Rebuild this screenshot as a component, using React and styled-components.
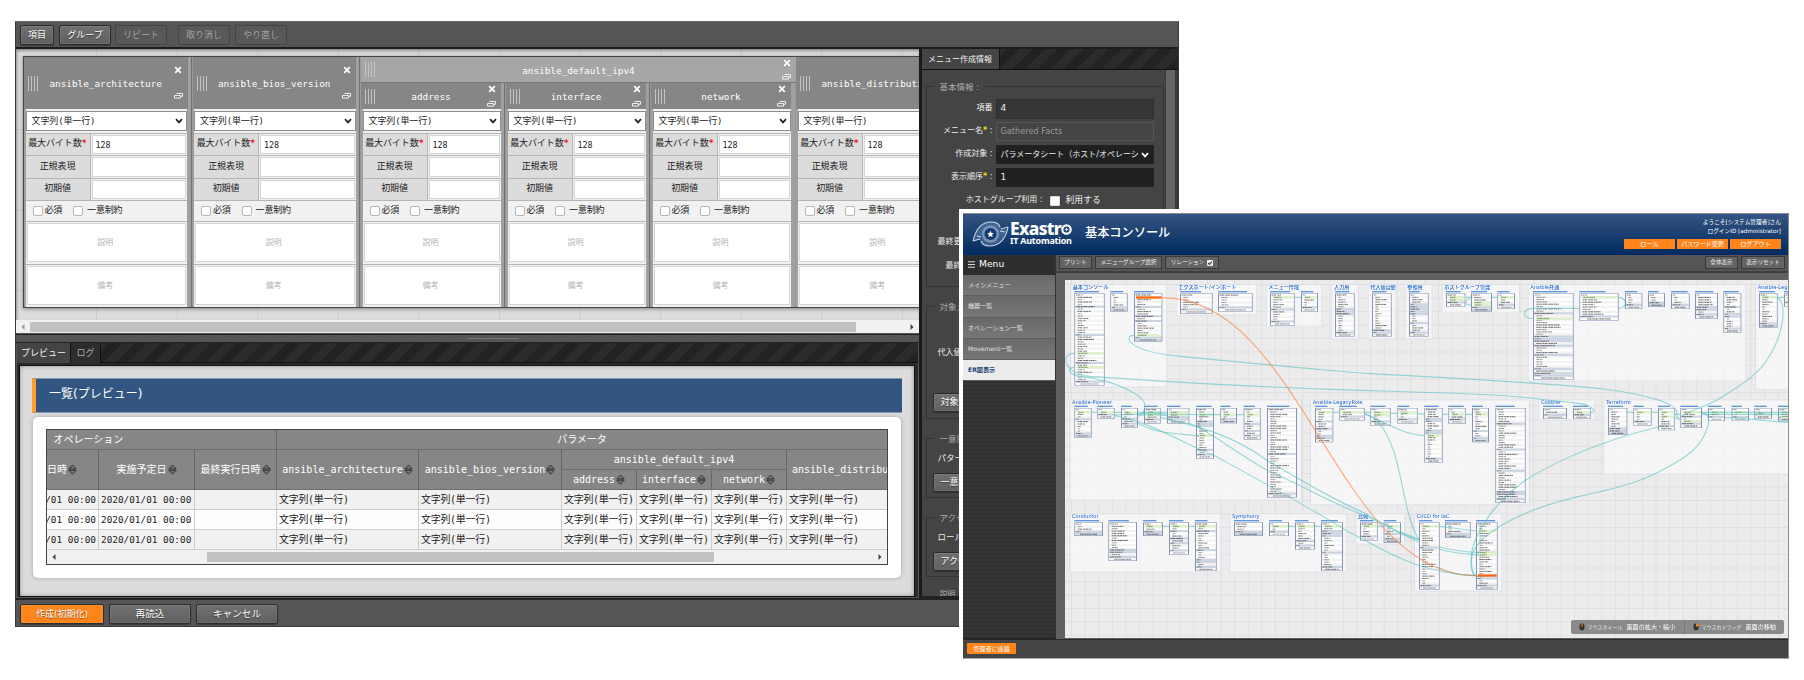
import React from "react";
import styled, { createGlobalStyle, css } from "styled-components";

const mono = `"DejaVu Sans Mono", "Noto Sans CJK JP", monospace`;
const sans = `"DejaVu Sans", "Noto Sans CJK JP", sans-serif`;

const GlobalStyle = createGlobalStyle`
  *, *::before, *::after { box-sizing: border-box; }
  body { margin: 0; background: #fff; }
  #root { font-family: ${sans}; }
`;

const Desktop = styled.div`
  position: relative;
  width: 1804px;
  height: 680px;
  overflow: hidden;
  background: #fff;
`;

const stripes = css`
  background: repeating-linear-gradient(-45deg, #222 0 9px, #2b2b2b 9px 18px);
`;

/* ---------- Menu editor window ---------- */

const EditorWindow = styled.section`
  position: absolute;
  left: 15px;
  top: 21px;
  width: 1164px;
  height: 606px;
  display: flex;
  flex-direction: column;
  background: #555;
  border: 1px solid #3a3a3a;
  border-top-color: #666;
  overflow: hidden;
`;

const Toolbar = styled.div`
  height: 27px;
  flex: none;
  display: flex;
  align-items: flex-start;
  padding: 3px 4px;
  background: #555;
  border-bottom: 2px solid #1c1c1c;
`;

const EditorButton = styled.button`
  flex: none;
  width: ${(p) => (p.$w ? `${p.$w}px` : "auto")};
  height: ${(p) => p.$h || 20}px;
  margin: 0 ${(p) => (p.$gap === undefined ? 4 : p.$gap)}px 0 0;
  padding: 0 ${(p) => (p.$w ? 0 : 7)}px;
  display: flex;
  align-items: center;
  justify-content: center;
  border: 1px solid ${(p) => (p.disabled ? "#444" : "#2c2c2c")};
  border-radius: 2px;
  background: ${(p) => (p.$primary ? "#ff851b" : p.disabled ? "#585858" : "linear-gradient(#707070, #606060)")};
  color: ${(p) => (p.disabled ? "#a4a4a4" : "#fff")};
  box-shadow: ${(p) => (p.disabled ? "none" : "inset 0 0 0 1px rgba(255,255,255,.08), 0 1px 1px rgba(0,0,0,.3)")};
  font: 9px/1 ${sans};
  font-size: ${(p) => p.$size || 9}px;
  white-space: nowrap;
  overflow: hidden;
  text-shadow: ${(p) => (p.disabled ? "none" : "0 1px 1px rgba(0, 0, 0, 0.5)")};
`;

const EditorMain = styled.div`
  flex: 1;
  min-height: 0;
  display: flex;
`;

const Workspace = styled.div`
  width: 902.5px;
  flex: none;
  display: flex;
  flex-direction: column;
`;

const ColumnCanvas = styled.div`
  height: 271px;
  flex: none;
  padding: 7px 0 0 7px;
  overflow: hidden;
  background-color: #dcdcdc;
  background-image: linear-gradient(90deg, #cfcfcf 1px, transparent 1px),
    linear-gradient(#cfcfcf 1px, transparent 1px);
  background-size: 80.6px 80.6px;
  background-position: 80px 80px;
  box-shadow: inset 1px 2px 3px rgba(0, 0, 0, 0.35);
`;

const ColumnStrip = styled.div`
  display: flex;
  width: 940px;
  height: 252px;
  background: #a0a0a0;
  border: 1px solid #444;
  box-shadow: 0 1px 4px rgba(0, 0, 0, 0.4);
`;

const ColumnBox = styled.div`
  flex: none;
  width: ${(p) => (p.$narrow ? 145 : 168.5)}px;
  height: 100%;
  display: flex;
  flex-direction: column;
  border-right: 1px solid #999;
  &:not(:last-child) { box-shadow: inset -1px 0 0 #707070; }
`;

const GroupBox = styled.div`
  flex: none;
  width: 435px;
  display: flex;
  flex-direction: column;
`;

const GroupColumns = styled.div`
  display: flex;
  flex: 1;
  min-height: 0;
`;

const ColumnHead = styled.div`
  height: ${(p) => p.$h}px;
  flex: none;
  margin-right: ${(p) => (p.$group ? 0 : 4)}px;
  display: flex;
  align-items: center;
  padding: 0 5px 0 4px;
  background: ${(p) => (p.$group ? "#a6a6a6" : "#868686")};
  border-bottom: ${(p) => (p.$group ? "1px solid #777" : "0")};
  color: #fff;
  font: 9.35px/1 ${mono};
`;

const Grip = styled.div`
  flex: none;
  width: 12px;
  height: 15px;
  background: repeating-linear-gradient(90deg, #c4c4c4 0 1px, transparent 1px 3px);
`;

const HeadName = styled.div`
  flex: 1;
  padding: 2px 2px 0 0;
  text-align: center;
  white-space: nowrap;
`;

const HeadTools = styled.div`
  flex: none;
  width: 9px;
  height: 100%;
  max-height: 40px;
  padding: ${(p) => (p.$tall ? "3px 0 4px" : "2px 0 2px")};
  display: flex;
  flex-direction: column;
  align-items: center;
  justify-content: space-between;
`;

const FieldArea = styled.div`
  flex: 1;
  margin: 0 4.5px 0 1.5px;
  display: flex;
  flex-direction: column;
  background: #f1f1f1;
  font: 9px/1 ${mono};
  color: #222;
`;

const TypeSelect = styled.div`
  height: 20px;
  flex: none;
  margin: 2px 0 1.5px;
  padding: 0 3px 0 5px;
  display: flex;
  align-items: center;
  justify-content: space-between;
  background: #fff;
  border: 1px solid #879096;
  font-size: 9px;
  letter-spacing: -0.12px;
`;

const FieldRow = styled.div`
  height: 22.5px;
  flex: none;
  display: flex;
  border-top: 1px solid #b5b5b5;
`;

const FieldLabel = styled.div`
  width: 65px;
  flex: none;
  display: flex;
  align-items: center;
  justify-content: center;
  padding-bottom: 1px;
  background: #dcdcdc;
  border-right: 1px solid #b5b5b5;
  white-space: nowrap;
  letter-spacing: -0.1px;
  b { color: #e22; font-weight: 700; }
`;

const FieldInput = styled.div`
  flex: 1;
  margin: 1px;
  border: 1px solid #d5d5d5;
  background: #fff;
  padding: 0 4px 0 3px;
  line-height: 18px;
  font-size: 8.3px;
`;

const CheckRow = styled.div`
  height: 20.5px;
  flex: none;
  display: flex;
  align-items: center;
  padding-left: 7px;
  border-top: 1px solid #b5b5b5;
`;

const CheckText = styled.span`
  margin: 0 11px 0 ${(p) => p.$ml}px;
  letter-spacing: -0.2px;
`;

const Check = styled.i`
  width: ${(p) => p.$s || 10}px;
  height: ${(p) => p.$s || 10}px;
  flex: none;
  background: #fff;
  border: 1px solid ${(p) => (p.$s ? "#ddd" : "#b5b5b5")};
  border-radius: ${(p) => (p.$s ? 1 : 2)}px;
`;

const NoteRow = styled.div`
  height: 43px;
  flex: none;
  padding: 1px;
  border-top: 1px solid #b5b5b5;
  div {
    height: 39px;
    display: flex;
    align-items: center;
    justify-content: center;
    padding: 2px 2px 0 0;
    background: #fff;
    border: 1px solid #d5d5d5;
    color: #b5b5b5;
    font-size: 8px;
  }
`;

const ScrollTrack = styled.div`
  height: ${(p) => p.$h}px;
  flex: none;
  display: flex;
  align-items: center;
  justify-content: space-between;
  padding: 0 5px;
  background: #f1f1f1;
`;

const ScrollSpace = styled.div`
  flex: 1;
  height: 10px;
  margin: 0 8px 0 ${(p) => p.$before}px;
  div { width: ${(p) => p.$w}px; height: 10px; background: #c1c1c1; }
`;

const SplitBar = styled.div`
  height: 9px;
  flex: none;
  display: flex;
  align-items: center;
  justify-content: center;
  background: #555;
  border-top: 1px solid #222;
  border-bottom: 1px solid #222;
  margin-top: 1px;
  i { width: 52px; height: 1px; background: #777; margin-left: 52px; }
`;

const PreviewPane = styled.div`
  flex: 1;
  min-height: 0;
  display: flex;
  flex-direction: column;
  border: 1px solid #555;
  border-top: 0;
  background: #2a2a2a;
`;

const TabBar = styled.div`
  height: ${(p) => p.$h}px;
  flex: none;
  display: flex;
  ${stripes}
  border-bottom: 1px solid #111;
`;

const Tab = styled.div`
  width: ${(p) => p.$w}px;
  height: 20px;
  display: flex;
  align-items: center;
  justify-content: center;
  padding-top: 1px;
  background: ${(p) => (p.$active ? "#444" : "#2d2d2d")};
  border-right: 1px solid #111;
  color: ${(p) => (p.$active ? "#f2f2f2" : "#aaa")};
  font: ${(p) => p.$size || 9}px/1 ${sans};
  white-space: nowrap;
`;

const PreviewBody = styled.div`
  height: 232px;
  flex: none;
  margin: 2px 3px 0 2px;
  padding: 12px 12px 0 12px;
  background: #dcdcdc;
  border: 1px solid #111;
  box-shadow: inset 0 0 4px rgba(0, 0, 0, 0.35);
`;

const PreviewTitle = styled.div`
  height: 35px;
  display: flex;
  align-items: center;
  padding: 0 0 3px 13px;
  background: #335581;
  border: 1px solid #8296b0;
  border-left: 4px solid #ff9e2c;
  border-right: 0;
  color: #fff;
  font: 12px/1 ${sans};
`;

const PreviewCard = styled.div`
  height: 161px;
  margin: 4px 1px 0;
  padding: 12px 13px;
  background: #fff;
  border-radius: 5px;
  box-shadow: 0 0 4px rgba(0, 0, 0, 0.25);
`;

const TableFrame = styled.div`
  height: 136px;
  border: 1px solid #444;
  overflow: hidden;
  background: #f1f1f1;
`;

const ResultGrid = styled.div`
  display: grid;
  grid-template-columns: 52px 96px 82px 142px 143px 75px 75px 75px 101px;
  grid-template-rows: 20px 20px 20px 20px 20px 20px;
  font: 10px/1 ${mono};
`;

const HeadCell = styled.div`
  grid-area: ${(p) => p.$area};
  display: flex;
  align-items: center;
  justify-content: ${(p) => (p.$left ? "flex-start" : "center")};
  gap: 1px;
  padding: 0 ${(p) => (p.$left ? p.$left : 0)}px;
  background: #868686;
  border-right: 1px solid #666;
  border-bottom: 1px solid #6d6d6d;
  color: #fff;
  white-space: nowrap;
  overflow: hidden;
`;

const DataCell = styled.div`
  display: flex;
  align-items: center;
  justify-content: ${(p) => (p.$right ? "flex-end" : "flex-start")};
  padding: 0 ${(p) => (p.$right ? 2 : 0)}px 0 ${(p) => (p.$right ? 0 : 2)}px;
  background: ${(p) => (p.$odd ? "#fdfdfd" : "#f1f1f1")};
  border-right: 1px solid #ccc;
  border-bottom: 1px solid #ccc;
  color: #222;
  font-size: ${(p) => (p.$date ? 9.4 : 10)}px;
  letter-spacing: ${(p) => (p.$date ? 0 : -0.3)}px;
  white-space: nowrap;
  overflow: hidden;
`;

const EditorFooter = styled.div`
  height: 28px;
  flex: none;
  display: flex;
  padding: 4px 4px;
  background: #555;
  border-top: 2px solid #222;
`;

/* ---------- Property panel ---------- */

const PropertyPanel = styled.aside`
  flex: 1;
  display: flex;
  flex-direction: column;
  background: #444;
  border-left: 3px solid #1a1a1a;
  border-bottom: 2px solid #222;
  overflow: hidden;
`;

const PropertyScroll = styled.div`
  flex: 1;
  min-height: 0;
  overflow: hidden;
  padding: 10px 14px 0 4px;
  display: flex;
  flex-direction: column;
  background: linear-gradient(90deg, transparent 243px, #3a3a3a 243px 244px, #666 244px 253px, #3a3a3a 253px);
`;

const FieldSet = styled.fieldset`
  flex: none;
  width: 238px;
  height: ${(p) => p.$h}px;
  margin: 0 0 ${(p) => p.$mb || 13}px;
  padding: ${(p) => p.$pt || 0}px 0 0 0;
  border: 1px solid #333;
  color: #eee;
  font: 8.5px/1 ${sans};
  min-width: 0;
  white-space: nowrap;
  legend { height: 13px; line-height: 14px; margin-left: 7px; padding: 0 6px; color: #aaa; }
`;

const PropRow = styled.div`
  height: 23px;
  display: flex;
  align-items: center;
  label {
    width: ${(p) => p.$lw}px;
    flex: none;
    text-align: right;
    margin-right: 3px;
    padding-bottom: 1px;
    font-size: 8px;
  }
  b { font-weight: 700; color: #e8e000; }
`;

const PropValue = styled.div`
  width: 158px;
  height: ${(p) => p.$h || 19}px;
  padding: 0 4px;
  display: flex;
  align-items: center;
  justify-content: space-between;
  background: ${(p) => p.$bg};
  border: 1px solid ${(p) => p.$bd};
  color: ${(p) => p.$c || "#eee"};
  font-size: ${(p) => p.$size || 9}px;
`;

const PropLine = styled.div`
  height: ${(p) => p.$h}px;
  display: flex;
  align-items: center;
  padding-left: ${(p) => p.$x}px;
  color: ${(p) => (p.$dim ? "#aaa" : "inherit")};
  font-size: ${(p) => p.$size || 8}px;
`;

/* ---------- Console window ---------- */

const ConsoleWindow = styled.section`
  position: absolute;
  left: 959px;
  top: 209px;
  width: 831px;
  height: 451px;
  padding: 4px 1px 1px 4px;
  background: #fff;
  display: flex;
  flex-direction: column;
`;

const ConsoleFrame = styled.div`
  flex: 1;
  min-height: 0;
  display: flex;
  flex-direction: column;
  border: 1px solid #8a8a8a;
  border-left: 0;
  border-bottom-color: #aaa;
  background: #444;
`;

const ConsoleHeader = styled.header`
  height: 41px;
  flex: none;
  display: flex;
  background: linear-gradient(#33558a 0, #30507e 10%, #002a60);
  color: #fff;
`;

const Logo = styled.div`
  display: flex;
  align-items: center;
  padding: 0 0 2px 9px;
  width: 122px;
`;

const LogoText = styled.div`
  margin: -2px 0 0 1px;
  font: 800 17.4px/15px "Noto Sans", sans-serif;
  letter-spacing: -0.7px;
  white-space: nowrap;
  small { display: block; font: 700 9px/9px "Noto Sans", sans-serif; letter-spacing: -0.25px; }
`;

const LogoName = styled.div`
  display: flex;
  align-items: center;
  svg { margin-top: 2px; }
`;

const ConsoleTitle = styled.h1`
  margin: 0;
  flex: 1;
  font: 500 12.2px/39px ${sans};
`;

const UserArea = styled.div`
  width: 170px;
  padding: 4px 7px 0 0;
  text-align: right;
  font: 5.7px/9.3px ${sans};
  white-space: nowrap;
`;

const UserButtons = styled.div`
  display: flex;
  justify-content: flex-end;
  gap: 2px;
  margin-top: 2px;
  span {
    width: 51px;
    height: 10.5px;
    text-align: center;
    line-height: 10px;
    background: #ff851b;
    font-size: 6.1px;
  }
`;

const ConsoleBody = styled.div`
  flex: 1;
  min-height: 0;
  display: flex;
`;

const SideMenu = styled.nav`
  width: 92px;
  flex: none;
  background: repeating-linear-gradient(#363636 0 2px, #303030 2px 4px);
  border-bottom: 1px solid #222;
  color: #ddd;
`;

const MenuTitle = styled.div`
  height: 20px;
  display: flex;
  align-items: center;
  gap: 4px;
  padding: 0 0 2px 5px;
  background: #2e2e2e;
  color: #fff;
  font: 9.2px/1 ${sans};
`;

const MenuItem = styled.div`
  height: 21.3px;
  padding: 0 5px;
  line-height: 19.5px;
  font-size: 6.1px;
  border-bottom: 1px solid #5c5c5c;
  background: ${(p) => (p.$active ? "#ececec" : "linear-gradient(#696969, #777)")};
  color: ${(p) => (p.$active ? "#1e3f75" : "#e0e0e0")};
  font-weight: ${(p) => (p.$active ? 700 : 400)};
`;

const ConsoleMain = styled.div`
  flex: 1;
  min-width: 0;
  display: flex;
  flex-direction: column;
  background: #606060;
  border-left: 1px solid #333;
`;

const ConsoleToolbar = styled.div`
  height: 18px;
  flex: none;
  display: flex;
  align-items: flex-start;
  padding: 1px 3px 0 3px;
  background: #555;
  border-bottom: 2px solid #3f3f3f;
`;

const ToolButton = styled.div`
  width: ${(p) => p.$w}px;
  height: 13px;
  display: flex;
  align-items: center;
  justify-content: center;
  gap: 3px;
  margin-right: ${(p) => (p.$gap === undefined ? 3 : p.$gap)}px;
  margin-left: ${(p) => (p.$push ? "auto" : 0)};
  border: 1px solid #3a3a3a;
  background: #646464;
  color: #eee;
  font: 5.6px/1 ${sans};
  white-space: nowrap;
`;

const TinyCheck = styled.i`
  width: 6px;
  height: 6px;
  display: flex;
  background: #eee;
  border-radius: 1px;
`;

const DiagramView = styled.div`
  position: relative;
  width: 723px;
  height: 358px;
  margin: 7px 0 0 9px;
  overflow: hidden;
  background-color: #ececec;
  background-image: linear-gradient(90deg, #e0e0e2 1px, transparent 1px),
    linear-gradient(#e0e0e2 1px, transparent 1px);
  background-size: 13.6px 13.5px;
  background-position: 6px 4px;
`;

/* The diagram is laid out at full size and zoomed out to a third. */
const World = styled.div`
  position: absolute;
  left: 0;
  top: 0;
  width: 2170px;
  height: 1075px;
  transform: scale(0.33333);
  transform-origin: 0 0;
  svg { position: absolute; left: 0; top: 0; }
`;

const GroupArea = styled.div`
  position: absolute;
  border: 3px solid #dcdfe8;
  background: rgba(250, 250, 252, 0.68);
  padding-left: 5px;
  color: #1464d2;
  font: 500 15.4px/13px ${sans};
  white-space: nowrap;
  overflow: hidden;
`;

const Hint = styled.div`
  position: absolute;
  right: 4px;
  bottom: 4px;
  width: 213px;
  height: 14px;
  display: flex;
  background: #8a8a8a;
  border-radius: 2px;
  color: #fff;
  font: 6.1px/14px ${sans};
  white-space: nowrap;
`;

const HintItem = styled.div`
  width: ${(p) => p.$w}px;
  flex: none;
  display: flex;
  align-items: center;
  padding-left: 8px;
  border-right: ${(p) => (p.$last ? 0 : 1)}px solid #777;
  svg { flex: none; margin-right: 2.5px; }
  em { font: 5px/14px ${sans}; color: #e4e4e4; margin-right: 4px; }
`;

const ConsoleFooter = styled.footer`
  height: 19px;
  flex: none;
  padding: 3px 4px;
  background: #444;
  border-top: 1px solid #2a2a2a;
  span {
    display: block;
    width: 49px;
    height: 11px;
    border-radius: 1px;
    background: #ff851b;
    color: #fff;
    text-align: center;
    font: 6.1px/11px ${sans};
  }
`;

/* ---------- Icons ---------- */

const CloseIcon = () => (
  <svg width="8" height="8" viewBox="0 0 8 8"><path d="M1.2 1.2 6.8 6.8M6.8 1.2 1.2 6.8" stroke="#fff" strokeWidth="1.7" /></svg>
);
const CopyIcon = () => (
  <svg width="9" height="6" viewBox="0 0 9 6"><path d="M2.5.5h6v2.8h-2M.5 2.5h6v2.6h-6z" fill="none" stroke="#eee" strokeWidth="1" /></svg>
);
const Chevron = ({ color = "#222" }) => (
  <svg width="8" height="6" viewBox="0 0 8 6"><path d="M1 1.2 4 4.4 7 1.2" fill="none" stroke={color} strokeWidth="1.7" /></svg>
);
const SortIcon = () => (
  <svg width="9" height="11" viewBox="0 0 9 11"><path d="M4.5 1 8.2 5H.8zM4.5 10.2.8 6.2h7.4z" fill="#777" stroke="#333" strokeWidth="1" /></svg>
);
const Arrow = ({ right, color = "#444" }) => (
  <svg width="4" height="6" viewBox="0 0 4 6"><path d={right ? "M.5 0 3.5 3 .5 6z" : "M3.5 0 .5 3l3 3z"} fill={color} /></svg>
);
const MenuIcon = () => (
  <svg width="7" height="7" viewBox="0 0 7 7"><path d="M0 .8h7M0 3.5h7M0 6.2h7" stroke="#ddd" /></svg>
);
const LogoMark = () => (
  <svg width="37" height="26" viewBox="0 0 37 26">
    <path d="M1 20C3 8 11 1 20 1c7 0 9 4 9 7h6L36 6C35 17 27 25 18 25c-6 0-9-3-10-6H4z" fill="#6d8bb5" opacity=".45" />
    <path d="M1 20C4 7 11 1 19 1c5 0 8 2 9 5M36 6C34 19 26 25 18 25c-5 0-8-2-9-5M1 20l7-2M36 6l-7 2M5 15l4 1M33 11l-5-1" fill="none" stroke="#c8d5e6" strokeWidth="1.1" />
    <circle cx="18.5" cy="13" r="8.7" fill="#8fa8ca" opacity=".7" />
    <circle cx="18.5" cy="13" r="6" fill="#123a70" />
    <path d="m18.5 9.7 1 2.2 2.4.3-1.8 1.6.5 2.4-2.1-1.2-2.1 1.2.5-2.4-1.8-1.6 2.4-.3z" fill="#fff" />
  </svg>
);
const LogoStarO = () => (
  <svg width="11" height="11" viewBox="0 0 11 11"><circle cx="5.5" cy="5.5" r="4.2" fill="none" stroke="#fff" strokeWidth="2.2" /><path d="M5.5 3.8v3.4M3.8 5.5h3.4" stroke="#fff" strokeWidth=".8" /></svg>
);
const MouseIcon = ({ side }) => (
  <svg width="6" height="8" viewBox="0 0 6 8">
    <rect x=".5" y=".5" width="5" height="7" rx="2.4" fill="#333" />
    {side ? <path d="M3 .5c2 0 2.6 1 2.6 3H3z" fill="#ff851b" /> : <path d="M3 1v2.6" stroke="#ff851b" strokeWidth="1.2" />}
  </svg>
);

/* ---------- Diagram data ---------- */

const groups = [
  ["基本コンソール", 15, 12, 292, 311], ["エクスポート/インポート", 332, 12, 245, 95],
  ["メニュー作成", 602, 12, 170, 130], ["入力用", 799, 12, 83, 167],
  ["代入値自動登録用", 908, 12, 86, 167], ["参照用", 1019, 12, 84, 167],
  ["ホストグループ管理", 1130, 12, 235, 89], ["Ansible共通", 1388, 12, 656, 293],
  ["Ansible-Legacy", 2070, 12, 240, 319], ["Ansible-Pioneer", 13, 358, 698, 304],
  ["Ansible-LegacyRole", 735, 358, 660, 318], ["Cobbler", 1420, 358, 171, 64],
  ["Terraform", 1615, 358, 700, 226], ["Conductor", 13, 700, 456, 178],
  ["Symphony", 493, 700, 354, 178], ["比較", 871, 700, 150, 94],
  ["CI/CD for IaC", 1047, 700, 265, 235],
];

/* x, y, width, height, highlighted row offsets, selected row offset */
const nodes = [
  [28, 40, 91, 277, [180, 222]], [136, 40, 52, 55, []], [207, 40, 85, 145, [126], 13],
  [345, 40, 98, 61, []], [459, 40, 104, 55, []], [615, 40, 74, 97, [12]], [708, 40, 51, 55, [12]],
  [810, 40, 59, 130, []], [921, 40, 59, 130, []], [1032, 40, 59, 130, []],
  [1143, 40, 58, 40, [12, 20]], [1218, 40, 63, 55, [28, 35]], [1297, 40, 53, 47, [12]],
  [1404, 40, 122, 259, [76]], [1543, 40, 118, 82, [12]], [1680, 40, 52, 47, []],
  [1749, 40, 51, 41, []], [1818, 40, 56, 47, []], [1890, 40, 69, 76, []], [1975, 40, 54, 118, []],
  [2082, 40, 56, 103, [12]], [2157, 40, 56, 40, [16]],
  [28, 384, 52, 89, [13]], [97, 384, 52, 32, [13]], [168, 384, 51, 59, [14]], [237, 384, 50, 47, [13, 21]],
  [306, 384, 67, 47, [13, 21]], [393, 384, 54, 152, [20, 82]], [466, 384, 50, 46, [20]],
  [536, 384, 51, 95, [20]], [606, 384, 90, 269, []],
  [750, 384, 55, 103, [13]], [823, 384, 76, 38, [13]], [916, 384, 61, 53, [13, 21]],
  [997, 384, 61, 47, [16]], [1078, 384, 55, 164, [83]], [1150, 384, 52, 47, [19]],
  [1221, 384, 51, 103, [19]], [1291, 384, 91, 285, []],
  [1434, 384, 72, 33, []], [1524, 384, 53, 33, [13]],
  [1629, 384, 58, 81, []], [1705, 384, 55, 53, [13]], [1779, 384, 50, 67, [13, 26]],
  [1846, 384, 65, 59, [13, 40]], [1929, 384, 51, 39, [13]], [2000, 384, 52, 39, [13]],
  [2068, 384, 53, 32, [17]], [2139, 384, 60, 40, [13, 26]],
  [28, 727, 86, 41, []], [130, 727, 86, 116, []], [234, 727, 60, 41, [12]], [312, 727, 60, 97, [12]],
  [390, 727, 65, 146, [12]], [507, 727, 87, 41, []], [612, 727, 60, 41, [12]], [690, 727, 60, 82, [12]],
  [768, 727, 66, 146, [12]], [885, 727, 53, 55, [12]], [956, 727, 52, 62, [12]],
  [1062, 727, 62, 202, [12]], [1140, 727, 77, 47, []], [1233, 727, 65, 202, [26, 91, 98], 160],
];

const edges = [
  "M207 166C175 166 180 215 355 230C600 254 800 273 915 281C1200 296 1480 312 1615 327C1760 345 1835 375 1835 395C1835 410 1838 420 1846 420",
  "M28 220C-6 220 -6 255 28 275C45 290 85 290 119 292C400 312 650 324 915 332C1100 337 1350 343 1420 357C1500 366 1560 368 1575 380C1590 390 1590 397 1577 397",
  "M28 262C4 262 10 285 50 290C150 302 240 345 240 378C240 396 225 400 237 400",
  "M80 397H97M149 397H168M219 397H306M149 405C250 400 300 403 466 404M516 404H536M219 399L306 407M219 407L306 397",
  "M219 430C270 460 330 460 393 467", "M287 412C370 435 480 450 605 540C730 615 830 670 900 700C960 735 1010 765 1062 780",
  "M373 430C430 450 500 510 605 570C730 625 820 680 900 706C980 745 1020 770 1062 785",
  "M149 407C270 430 350 490 445 525C600 610 720 675 850 755C950 805 1050 880 1233 887",
  "M899 400C950 420 965 460 985 510C1020 620 1020 710 1062 780", "M805 397H823M899 397H916M977 400H997M1058 400C1068 400 1070 403 1078 403M1133 403H1150M1202 403H1221",
  "M899 403C960 425 1010 463 1078 467",
  "M1779 441C1620 480 1480 540 1382 600C1270 680 1210 790 1220 850C1220 870 1225 887 1233 887",
  "M1911 397C1955 405 1920 490 1860 530C1740 610 1650 625 1540 650C1390 685 1300 735 1250 780C1200 830 1220 887 1233 887",
  "M2138 53C2170 75 2150 170 2115 225C2080 290 2010 325 1965 355C1930 378 1900 380 1846 410",
  "M1124 739L1233 753M1124 800C1160 812 1200 815 1245 818M1124 807C1160 820 1200 822 1245 825M1115 860C1160 885 1200 887 1233 887",
  "M1404 116C1370 116 1370 85 1404 85H1543M1661 52C1685 55 1690 84 1661 85",
  "M1201 52H1218C1195 65 1200 75 1218 75M1281 52H1297M689 52H708M2138 52H2157",
  "M294 739H312M372 739H390M672 739H690M750 739H768M938 739H956M1008 756L1062 778",
  "M1760 397H1779M1829 403H1846M1829 414H1846M1911 397H2170M1911 403H2170M1980 413C2060 415 2100 424 2170 427M1687 397L1705 397",
];
const selectedEdge = "M292 53C712 53 813 887 1233 887";

const noise = (a, b) => {
  const v = Math.sin(a * 12.9898 + b * 78.233) * 43758.5453;
  return v - Math.floor(v);
};

function Entity({ node, seed }) {
  const [x, y, w, h, marks, selected] = node;
  const rows = Math.max(2, Math.round((h - 3) / 7));
  const rh = (h - 3) / rows;
  return (
    <g transform={`translate(${x} ${y})`}>
      <rect x="0" y="-7" width={w * (0.55 + noise(seed, 1) * 0.35)} height="4" fill="#2f77d6" opacity=".75" />
      <rect x="1.5" y="1.5" width={w - 3} height={h - 3} fill="#fff" stroke="#8594b2" strokeWidth="3" />
      {Array.from({ length: rows }, (_, i) => {
        const n = noise(seed, i + 3);
        const section = i === rows - 2 || (i > 2 && noise(seed + 9, i) > 0.82);
        const ry = 1.5 + i * rh;
        const tw = i === rows - 1 ? w * 0.6 : w * (0.14 + n * n * 0.5);
        const tx = i === rows - 1 ? w * 0.2 : section || i === 0 ? 5 : 10;
        return (
          <g key={i}>
            <rect x="3" y={ry} width={w - 6} height={rh} fill={section ? "#ccd4e1" : i % 2 ? "#f3f3f4" : "#fff"} />
            <path d={`M${tx} ${ry + rh / 2}h${tw}`} stroke="#444" strokeWidth="3" strokeDasharray={n > 0.4 ? "5 1 7 2 3 1" : "9 1"} opacity={0.45 + n * 0.4} />
          </g>
        );
      })}
      {marks.map((m) => (
        <g key={m}>
          <rect x="8" y={m - 4} width={w - 11} height="8" fill="#def0cc" />
          <path d={`M12 ${m}h${w * 0.3}`} stroke="#65795a" strokeWidth="2.5" strokeDasharray="5 1 3 1" />
        </g>
      ))}
      {selected && <rect x="6" y={selected - 4} width={w - 9} height="7" fill="#ff6b12" />}
    </g>
  );
}

function ErDiagram() {
  return (
    <DiagramView>
      <World>
        {groups.map(([name, left, top, width, height]) => (
          <GroupArea key={name} style={{ left, top, width, height }}>{name}</GroupArea>
        ))}
        <svg width="2170" height="1075" viewBox="0 0 2170 1075" fill="none">
          {nodes.map((n, i) => <Entity key={i} node={n} seed={i + 1} />)}
          {edges.map((d) => <path key={d} d={d} stroke="#4dbdbd" strokeWidth="3.4" opacity=".55" />)}
          <path d={selectedEdge} stroke="#ff7a2e" strokeWidth="3.4" opacity=".6" />
        </svg>
      </World>
      <Hint>
        <HintItem $w={114}><MouseIcon /><em>マウスホイール</em>画面の拡大・縮小</HintItem>
        <HintItem $w={99} $last><MouseIcon side /><em>マウス右ドラッグ</em>画面の移動</HintItem>
      </Hint>
    </DiagramView>
  );
}

/* ---------- Editor parts ---------- */

function Head({ name, height, group }) {
  return (
    <ColumnHead $h={height} $group={group}>
      <Grip />
      <HeadName>{name}</HeadName>
      <HeadTools $tall={height > 40}><CloseIcon /><CopyIcon /></HeadTools>
    </ColumnHead>
  );
}

function Column({ name, narrow }) {
  return (
    <ColumnBox $narrow={narrow}>
      <Head name={name} height={narrow ? 26 : 52} />
      <FieldArea>
        <TypeSelect>文字列(単一行)<Chevron /></TypeSelect>
        <FieldRow><FieldLabel>最大バイト数<b>*</b></FieldLabel><FieldInput>128</FieldInput></FieldRow>
        <FieldRow><FieldLabel>正規表現</FieldLabel><FieldInput /></FieldRow>
        <FieldRow><FieldLabel>初期値</FieldLabel><FieldInput /></FieldRow>
        <CheckRow>
          <Check /><CheckText $ml={2}>必須</CheckText>
          <Check /><CheckText $ml={4}>一意制約</CheckText>
        </CheckRow>
        <NoteRow><div>説明</div></NoteRow>
        <NoteRow><div>備考</div></NoteRow>
      </FieldArea>
    </ColumnBox>
  );
}

function ResultTable() {
  const date = "2020/01/01 00:00";
  const value = "文字列(単一行)";
  return (
    <TableFrame>
      <ResultGrid>
        <HeadCell $area="1 / 1 / 2 / 4" $left={6.5}>オペレーション</HeadCell>
        <HeadCell $area="1 / 4 / 2 / 10"><span>パラメータ</span></HeadCell>
        <HeadCell $area="2 / 1 / 4 / 2" $left={0.1}>日時<SortIcon /></HeadCell>
        <HeadCell $area="2 / 2 / 4 / 3">実施予定日<SortIcon /></HeadCell>
        <HeadCell $area="2 / 3 / 4 / 4">最終実行日時<SortIcon /></HeadCell>
        <HeadCell $area="2 / 4 / 4 / 5">ansible_architecture<SortIcon /></HeadCell>
        <HeadCell $area="2 / 5 / 4 / 6">ansible_bios_version<SortIcon /></HeadCell>
        <HeadCell $area="2 / 6 / 3 / 9">ansible_default_ipv4</HeadCell>
        <HeadCell $area="3 / 6 / 4 / 7">address<SortIcon /></HeadCell>
        <HeadCell $area="3 / 7 / 4 / 8">interface<SortIcon /></HeadCell>
        <HeadCell $area="3 / 8 / 4 / 9">network<SortIcon /></HeadCell>
        <HeadCell $area="2 / 9 / 4 / 10" $left={5}>ansible_distribution</HeadCell>
        {[0, 1, 2].map((r) => (
          <React.Fragment key={r}>
            <DataCell $odd={r === 1} $right $date>{date.slice(7)}</DataCell>
            <DataCell $odd={r === 1} $date>{date}</DataCell>
            <DataCell $odd={r === 1} />
            {[0, 1, 2, 3, 4, 5].map((c) => <DataCell key={c} $odd={r === 1}>{value}</DataCell>)}
          </React.Fragment>
        ))}
      </ResultGrid>
      <ScrollTrack $h={14}><Arrow /><ScrollSpace $before={151} $w={507}><div /></ScrollSpace><Arrow right /></ScrollTrack>
    </TableFrame>
  );
}

function Properties() {
  return (
    <PropertyPanel>
      <TabBar $h={21}><Tab $active $w={78} $size={8}>メニュー作成情報</Tab></TabBar>
      <PropertyScroll>
        <FieldSet $h={206.5} $pt={4}>
          <legend>基本情報 :</legend>
          <PropRow $lw={66}><label>項番</label><PropValue $h={20} $bg="#363636" $bd="#303030">4</PropValue></PropRow>
          <PropRow $lw={66}><label>メニュー名<b>*</b> :</label><PropValue $bg="#444" $bd="#555" $c="#999" $size={8.2}>Gathered Facts</PropValue></PropRow>
          <PropRow $lw={66}><label>作成対象 :</label><PropValue $bg="#202020" $bd="#222" $size={8}>パラメータシート（ホスト/オペレーシ<Chevron color="#fff" /></PropValue></PropRow>
          <PropRow $lw={66}><label>表示順序<b>*</b> :</label><PropValue $bg="#202020" $bd="#222">1</PropValue></PropRow>
          <PropRow $lw={116}><label>ホストグループ利用 :</label><PropLine $h={20} $x={4}><Check $s={10} /></PropLine><PropLine $h={20} $x={6} $size={8.8}>利用する</PropLine></PropRow>
          <PropLine $h={17} />
          <PropLine $h={25} $x={11}>最終更新日時 :</PropLine>
          <PropLine $h={23} $x={19}>最終更新者 :</PropLine>
        </FieldSet>
        <FieldSet $h={119} $pt={1}>
          <legend>対象メニューグループ :</legend>
          <PropLine $h={23} />
          <PropLine $h={32} $x={11}>代入値自動登録用 :</PropLine>
          <PropLine $h={24} />
          <PropLine $h={20} $x={6}><EditorButton $h={19}>対象メニューグループ選択</EditorButton></PropLine>
        </FieldSet>
        <FieldSet $h={66}>
          <legend>一意制約(複数項目) :</legend>
          <PropLine $h={28} $x={11} $size={8.5}>パターン :</PropLine>
          <PropLine $h={19} $x={6}><EditorButton $h={19}>一意制約選択</EditorButton></PropLine>
        </FieldSet>
        <FieldSet $h={66} $mb={11}>
          <legend>アクセス許可ロール :</legend>
          <PropLine $h={28} $x={11} $size={8.5}>ロール :</PropLine>
          <PropLine $h={19} $x={6}><EditorButton $h={19}>アクセス許可ロール選択</EditorButton></PropLine>
        </FieldSet>
        <PropLine $h={13} $x={14} $dim>説明</PropLine>
      </PropertyScroll>
    </PropertyPanel>
  );
}

function MenuEditor() {
  return (
    <EditorWindow>
      <Toolbar>
        <EditorButton $w={34} $gap={5}>項目</EditorButton>
        <EditorButton $w={52}>グループ</EditorButton>
        <EditorButton $w={52} $gap={11} disabled>リピート</EditorButton>
        <EditorButton $w={52} $gap={5} disabled>取り消し</EditorButton>
        <EditorButton $w={52} disabled>やり直し</EditorButton>
      </Toolbar>
      <EditorMain>
        <Workspace>
          <ColumnCanvas>
            <ColumnStrip>
              <Column name="ansible_architecture" />
              <Column name="ansible_bios_version" />
              <GroupBox>
                <Head name="ansible_default_ipv4" height={26} group />
                <GroupColumns>
                  <Column name="address" narrow />
                  <Column name="interface" narrow />
                  <Column name="network" narrow />
                </GroupColumns>
              </GroupBox>
              <Column name="ansible_distribution" />
            </ColumnStrip>
          </ColumnCanvas>
          <ScrollTrack $h={13}><Arrow color="#999" /><ScrollSpace $before={5} $w={826}><div /></ScrollSpace><Arrow right /></ScrollTrack>
          <SplitBar><i /></SplitBar>
          <PreviewPane>
            <TabBar $h={20}><Tab $active $w={54}>プレビュー</Tab><Tab $w={30}>ログ</Tab></TabBar>
            <PreviewBody>
              <PreviewTitle>一覧(プレビュー)</PreviewTitle>
              <PreviewCard><ResultTable /></PreviewCard>
            </PreviewBody>
          </PreviewPane>
        </Workspace>
        <Properties />
      </EditorMain>
      <EditorFooter>
        <EditorButton $w={84} $gap={5} $primary>作成(初期化)</EditorButton>
        <EditorButton $w={82} $gap={5} $size={9.6}>再読込</EditorButton>
        <EditorButton $w={82} $size={9.6}>キャンセル</EditorButton>
      </EditorFooter>
    </EditorWindow>
  );
}

function Console() {
  return (
    <ConsoleWindow>
      <ConsoleFrame>
        <ConsoleHeader>
          <Logo>
            <LogoMark />
            <LogoText><LogoName>Exastr<LogoStarO /></LogoName><small>IT Automation</small></LogoText>
          </Logo>
          <ConsoleTitle>基本コンソール</ConsoleTitle>
          <UserArea>
            ようこそ[システム管理者]さん<br />ログインID [administrator]
            <UserButtons><span>ロール</span><span>パスワード変更</span><span>ログアウト</span></UserButtons>
          </UserArea>
        </ConsoleHeader>
        <ConsoleBody>
          <SideMenu>
            <MenuTitle><MenuIcon />Menu</MenuTitle>
            <MenuItem>メインメニュー</MenuItem>
            <MenuItem>機器一覧</MenuItem>
            <MenuItem>オペレーション一覧</MenuItem>
            <MenuItem>Movement一覧</MenuItem>
            <MenuItem $active>ER図表示</MenuItem>
          </SideMenu>
          <ConsoleMain>
            <ConsoleToolbar>
              <ToolButton $w={33}>プリント</ToolButton>
              <ToolButton $w={67}>メニューグループ選択</ToolButton>
              <ToolButton $w={54}>
                リレーション
                <TinyCheck><svg width="6" height="6" viewBox="0 0 7 7"><path d="m1.3 3.4 1.6 1.7 2.8-3.3" fill="none" stroke="#333" strokeWidth="1.2" /></svg></TinyCheck>
              </ToolButton>
              <ToolButton $w={33} $push>全体表示</ToolButton>
              <ToolButton $w={44} $gap={0}>表示リセット</ToolButton>
            </ConsoleToolbar>
            <ErDiagram />
          </ConsoleMain>
        </ConsoleBody>
        <ConsoleFooter><span>管理者に連絡</span></ConsoleFooter>
      </ConsoleFrame>
    </ConsoleWindow>
  );
}

export default function App() {
  return (
    <Desktop>
      <GlobalStyle />
      <MenuEditor />
      <Console />
    </Desktop>
  );
}
